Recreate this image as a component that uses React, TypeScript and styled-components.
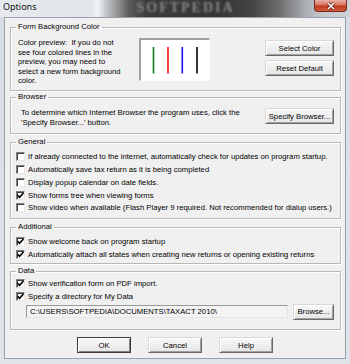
import React from "react";
import styled, { createGlobalStyle } from "styled-components";

const FS = "7.7px";

const Global = createGlobalStyle`
  html, body { margin: 0; padding: 0; background: #d9dfe5; }
  body {
    width: 350px; height: 364px; overflow: hidden;
    font-family: "Liberation Sans", Arial, sans-serif;
    color: #000;
  }
`;

const Window = styled.div`
  width: 350px;
  height: 364px;
  display: flex;
  flex-direction: column;
  background: linear-gradient(180deg, #d7dde4 0%, #dfe4e9 100%);
`;

const TitleBar = styled.div`
  height: 17px;
  flex: none;
  display: flex;
  align-items: flex-start;
  overflow: hidden;
  background: linear-gradient(
    90deg,
    #e6eaee 0%,
    #e2e6ea 26%,
    #f0f2f4 28%,
    #c8ccd0 30%,
    #9a9c9e 33%,
    #5a5a5a 37%,
    #3a3a3a 42%,
    #353535 62%,
    #444 72%,
    #6e6e6e 80%,
    #a8acb0 87%,
    #c4c9ce 92%,
    #cfd4d9 100%
  );
`;

const TitleText = styled.span`
  font-family: "Noto Sans", "Liberation Sans", sans-serif;
  font-size: 9px;
  line-height: 14px;
  margin-left: 3px;
  color: #111;
`;

const Watermark = styled.span`
  font-family: "Liberation Serif", serif;
  font-weight: bold;
  font-size: 14px;
  line-height: 15px;
  letter-spacing: 2px;
  margin-left: 100px;
  color: #8a8a8a;
  filter: blur(1px);
`;

const CloseButton = styled.div`
  margin-left: auto;
  margin-right: 3px;
  width: 31px;
  height: 11px;
  border: 1px solid #7a2a1e;
  border-top: none;
  border-radius: 0 0 4px 4px;
  background: linear-gradient(180deg, #eab0a4 0%, #d8735f 45%, #c0391f 55%, #d45a3c 100%);
  display: flex;
  align-items: center;
  justify-content: center;
`;

const Client = styled.div`
  flex: 1;
  margin: 0 4px 5px 4px;
  background: #f0f0f0;
  border: 1px solid #97a2ad;
  padding: 3px 4px 0 5px;
  display: flex;
  flex-direction: column;
`;

const Group = styled.fieldset<{ $h: number; $mt: number }>`
  box-sizing: border-box;
  height: ${(p) => p.$h}px;
  margin: ${(p) => p.$mt}px 0 0 0;
  padding: 0;
  min-width: 0;
  border: 1px solid #b8b8b8;
  box-shadow: inset 1px 1px 0 #fff, 1px 1px 0 #fff;
  flex: none;
`;

const Legend = styled.legend`
  font-size: ${FS};
  line-height: 12px;
  padding: 0 2px;
  margin-left: 5px;
`;

const Row = styled.div<{ $pt?: number; $pl?: number }>`
  display: flex;
  align-items: flex-start;
  padding: ${(p) => p.$pt ?? 0}px 6px 0 ${(p) => p.$pl ?? 0}px;
`;

const Para = styled.div<{ $w?: number; $lh: number }>`
  font-size: ${FS};
  line-height: ${(p) => p.$lh}px;
  width: ${(p) => (p.$w ? `${p.$w}px` : "auto")};
  flex: none;
`;

const Preview = styled.div`
  box-sizing: border-box;
  width: 71px;
  height: 43px;
  background: #fff;
  border-top: 2px solid #a0a0a0;
  border-left: 2px solid #a0a0a0;
  border-right: 1px solid #fff;
  border-bottom: 1px solid #fff;
  flex: none;
`;

const ButtonColumn = styled.div`
  margin-left: auto;
  margin-top: 2px;
  display: flex;
  flex-direction: column;
  gap: 4px;
`;

const Button = styled.div<{ $w: number; $default?: boolean }>`
  box-sizing: border-box;
  width: ${(p) => p.$w}px;
  height: 16px;
  flex: none;
  display: flex;
  align-items: center;
  justify-content: center;
  font-size: ${FS};
  background: linear-gradient(180deg, #f7f7f7 0%, #efefef 50%, #e6e6e6 100%);
  border: 1px solid;
  border-color: ${(p) => (p.$default ? "#3c3c3c" : "#d8d8d8 #6a6a6a #6a6a6a #d8d8d8")};
  box-shadow: ${(p) =>
    p.$default
      ? "inset 1px 1px 0 #fff, inset -1px -1px 0 #808080"
      : "inset 1px 1px 0 #fff, inset -1px -1px 0 #a0a0a0"};
  white-space: nowrap;
`;

const RightButton = styled(Button)<{ $mt: number }>`
  margin-left: auto;
  margin-top: ${(p) => p.$mt}px;
`;

const CheckList = styled.div<{ $pt: number }>`
  display: flex;
  flex-direction: column;
  padding: ${(p) => p.$pt}px 0 0 5px;
`;

const CheckRow = styled.div`
  height: 12.75px;
  display: flex;
  align-items: center;
  gap: 3px;
  font-size: ${FS};
  white-space: nowrap;
`;

const Box = styled.span`
  box-sizing: border-box;
  width: 9px;
  height: 9px;
  flex: none;
  background: #fff;
  border-top: 1px solid #808080;
  border-left: 1px solid #808080;
  border-right: 1px solid #e8e8e8;
  border-bottom: 1px solid #e8e8e8;
  box-shadow: inset 1px 1px 0 #404040;
  display: flex;
  align-items: center;
  justify-content: center;
`;

const PathRow = styled.div`
  display: flex;
  align-items: center;
  padding: 1px 6px 0 15px;
`;

const PathField = styled.div`
  box-sizing: border-box;
  width: 263px;
  height: 13px;
  background: #f3f3f3;
  border-top: 1px solid #9a9a9a;
  border-left: 1px solid #9a9a9a;
  border-right: 1px solid #e6e6e6;
  border-bottom: 1px solid #e6e6e6;
  font-size: ${FS};
  line-height: 11px;
  padding-left: 3px;
  white-space: nowrap;
  overflow: hidden;
`;

const BrowseButton = styled(Button)`
  margin-left: 5px;
`;

const BottomBar = styled.div`
  margin-top: 7px;
  display: flex;
  justify-content: center;
  gap: 17px;
  padding-right: 1px;
`;

const Check = () => (
  <svg width="7" height="7" viewBox="0 0 7 7">
    <path d="M0.6 3.2 L2.6 5.3 L6.4 1" fill="none" stroke="#000" strokeWidth="1.6" />
  </svg>
);

const CheckItem = ({ checked, label }: { checked?: boolean; label: string }) => (
  <CheckRow>
    <Box>{checked && <Check />}</Box>
    <span>{label}</span>
  </CheckRow>
);

export default function App() {
  return (
    <>
      <Global />
      <Window>
        <TitleBar>
          <TitleText>Options</TitleText>
          <Watermark>SOFTPEDIA</Watermark>
          <CloseButton>
            <svg width="10" height="8" viewBox="0 0 10 8">
              <path d="M2 1 L8 7 M8 1 L2 7" stroke="#5a1a10" strokeWidth="3" />
              <path d="M2 1 L8 7 M8 1 L2 7" stroke="#fff" strokeWidth="1.6" />
            </svg>
          </CloseButton>
        </TitleBar>
        <Client>
          <Group $h={70} $mt={0}>
            <Legend>Form Background Color</Legend>
            <Row $pt={5} $pl={7}>
              <Para $w={121} $lh={9.5}>
                Color preview:&nbsp; If you do not
                <br />
                see four colored lines in the
                <br />
                preview, you may need to
                <br />
                select a new form background
                <br />
                color.
              </Para>
              <Preview>
                <svg width="68" height="40" viewBox="0 0 68 40">
                  <line x1="12.5" y1="7" x2="12.5" y2="33.5" stroke="#0a7a1a" strokeWidth="1.6" />
                  <line x1="27" y1="7" x2="27" y2="33.5" stroke="#f01010" strokeWidth="1.6" />
                  <line x1="41.3" y1="7" x2="41.3" y2="33.5" stroke="#1010f0" strokeWidth="1.6" />
                  <line x1="56" y1="7" x2="56" y2="33.5" stroke="#000" strokeWidth="1.6" />
                </svg>
              </Preview>
              <ButtonColumn>
                <Button $w={69}>Select Color</Button>
                <Button $w={69}>Reset Default</Button>
              </ButtonColumn>
            </Row>
          </Group>

          <Group $h={43} $mt={0}>
            <Legend>Browser</Legend>
            <Row $pt={5} $pl={10}>
              <Para $lh={10}>
                To determine which Internet Browser the program uses, click the
                <br />
                'Specify Browser...' button.
              </Para>
              <RightButton $w={69} $mt={0}>
                Specify Browser...
              </RightButton>
            </Row>
          </Group>

          <Group $h={83} $mt={2}>
            <Legend>General</Legend>
            <CheckList $pt={2.5}>
              <CheckItem label="If already connected to the internet, automatically check for updates on program startup." />
              <CheckItem label="Automatically save tax return as it is being completed" />
              <CheckItem label="Display popup calendar on date fields." />
              <CheckItem checked label="Show forms tree when viewing forms" />
              <CheckItem label="Show video when available (Flash Player 9 required. Not recommended for dialup users.)" />
            </CheckList>
          </Group>

          <Group $h={43} $mt={2}>
            <Legend>Additional</Legend>
            <CheckList $pt={2}>
              <CheckItem checked label="Show welcome back on program startup" />
              <CheckItem checked label="Automatically attach all states when creating new returns or opening existing returns" />
            </CheckList>
          </Group>

          <Group $h={65} $mt={1}>
            <Legend>Data</Legend>
            <CheckList $pt={0}>
              <CheckItem checked label="Show verification form on PDF import." />
              <CheckItem checked label="Specify a directory for My Data" />
            </CheckList>
            <PathRow>
              <PathField>C:\USERS\SOFTPEDIA\DOCUMENTS\TAXACT 2010\</PathField>
              <BrowseButton $w={41}>Browse...</BrowseButton>
            </PathRow>
          </Group>

          <BottomBar>
            <Button $w={54} $default>
              OK
            </Button>
            <Button $w={54}>Cancel</Button>
            <Button $w={54}>Help</Button>
          </BottomBar>
        </Client>
      </Window>
    </>
  );
}
